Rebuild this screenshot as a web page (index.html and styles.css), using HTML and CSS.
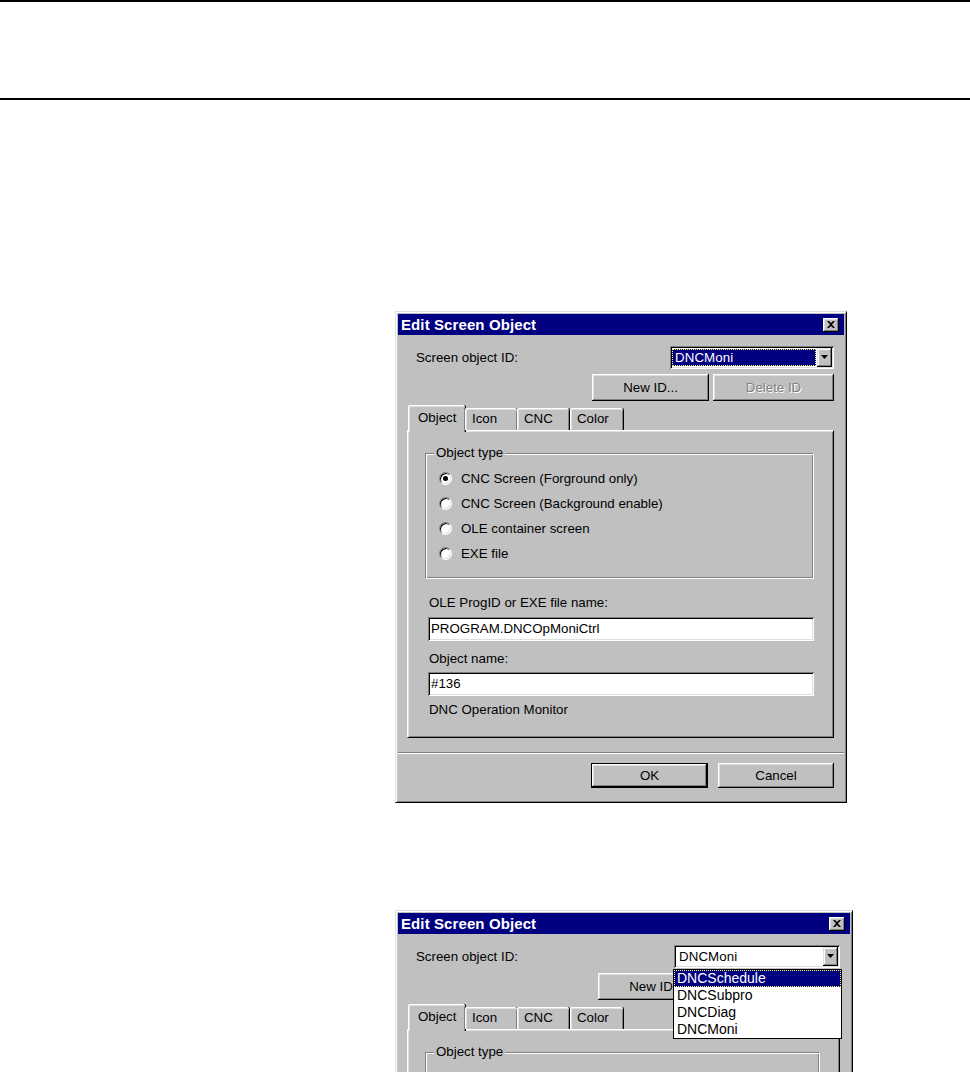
FILE: index.html
```html
<!DOCTYPE html>
<html lang="en">
<head>
<meta charset="utf-8">
<title>Edit Screen Object</title>
<link rel="stylesheet" href="styles.css">
</head>
<body>
<div class="page">
  <div class="running-head"></div>

  <!-- Dialog with the ID combo focused -->
  <figure class="shot shot--first">
    <div class="dialog">
      <div class="titlebar">
        <span class="titlebar__text">Edit Screen Object</span>
        <span class="titlebar__close">
          <svg width="8" height="7" viewBox="0 0 8 7"><path d="M0 0h2l2 2 2-2h2L5 3.5 8 7H6L4 5 2 7H0l3-3.5z" fill="#000"/></svg>
        </span>
      </div>
      <div class="dialog__body">
        <div class="id-row">
          <span class="label label--id">Screen object ID:</span>
          <div class="combo">
            <span class="combo__value combo__value--selected">DNCMoni</span>
            <span class="combo__btn"><svg width="7" height="4" viewBox="0 0 7 4"><path d="M0 0h7L3.5 4z" fill="#000"/></svg></span>
          </div>
        </div>
        <div class="id-buttons">
          <span class="btn btn--newid">New ID...</span>
          <span class="btn btn--delid btn--disabled">Delete ID</span>
        </div>
        <div class="tabs">
          <span class="tab tab--active tab--object">Object</span>
          <span class="tab tab--icon">Icon</span>
          <span class="tab tab--cnc">CNC</span>
          <span class="tab tab--color">Color</span>
        </div>
        <div class="panel">
          <div class="group">
            <span class="group__legend">Object type</span>
            <div class="radio-row"><span class="radio radio--on"></span>CNC Screen (Forground only)</div>
            <div class="radio-row"><span class="radio"></span>CNC Screen (Background enable)</div>
            <div class="radio-row"><span class="radio"></span>OLE container screen</div>
            <div class="radio-row"><span class="radio"></span>EXE file</div>
          </div>
          <div class="field-label field-label--prog">OLE ProgID or EXE file name:</div>
          <div class="textbox">PROGRAM.DNCOpMoniCtrl</div>
          <div class="field-label field-label--name">Object name:</div>
          <div class="textbox">#136</div>
          <div class="field-label field-label--desc">DNC Operation Monitor</div>
        </div>
      </div>
      <div class="separator"></div>
      <div class="footer">
        <span class="btn btn--ok btn--default">OK</span>
        <span class="btn btn--cancel">Cancel</span>
      </div>
    </div>
  </figure>

  <!-- Upper part of the same dialog with the ID list dropped down -->
  <figure class="shot shot--second">
    <div class="dialog dialog--wide">
      <div class="titlebar">
        <span class="titlebar__text">Edit Screen Object</span>
        <span class="titlebar__close">
          <svg width="8" height="7" viewBox="0 0 8 7"><path d="M0 0h2l2 2 2-2h2L5 3.5 8 7H6L4 5 2 7H0l3-3.5z" fill="#000"/></svg>
        </span>
      </div>
      <div class="dialog__body">
        <div class="id-row">
          <span class="label label--id">Screen object ID:</span>
          <div class="combo combo--wide">
            <span class="combo__value">DNCMoni</span>
            <span class="combo__btn"><svg width="7" height="4" viewBox="0 0 7 4"><path d="M0 0h7L3.5 4z" fill="#000"/></svg></span>
            <ul class="droplist">
              <li class="droplist__item droplist__item--hot">DNCSchedule</li>
              <li class="droplist__item">DNCSubpro</li>
              <li class="droplist__item">DNCDiag</li>
              <li class="droplist__item">DNCMoni</li>
            </ul>
          </div>
        </div>
        <div class="id-buttons">
          <span class="btn btn--newid">New ID...</span>
          <span class="btn btn--delid btn--disabled">Delete ID</span>
        </div>
        <div class="tabs">
          <span class="tab tab--active tab--object">Object</span>
          <span class="tab tab--icon">Icon</span>
          <span class="tab tab--cnc">CNC</span>
          <span class="tab tab--color">Color</span>
        </div>
        <div class="panel">
          <div class="group">
            <span class="group__legend">Object type</span>
          </div>
        </div>
      </div>
    </div>
  </figure>
</div>
</body>
</html>
```

FILE: styles.css
```css
html, body {
  margin: 0;
  padding: 0;
  background: #fff;
  height: 1072px;
  overflow: hidden;
}

.page {
  width: 970px;
  font-family: "Liberation Sans", Arial, sans-serif;
  font-size: 13.3px;
  color: #000;
}

/* page header rules */
.running-head {
  height: 96px;
  border-top: 2px solid #000;
  border-bottom: 2px solid #000;
}

.shot {
  margin: 0 0 0 395px;
  padding: 0;
}
.shot--first { margin-top: 211px; }
.shot--second {
  margin-top: 107px;
  height: 162px;
  overflow: hidden;
}

/* window frame */
.dialog {
  box-sizing: border-box;
  width: 452px;
  height: 492px;
  background: #c0c0c0;
  border: 1px solid;
  border-color: #dfdfdf #000 #000 #dfdfdf;
  box-shadow: inset 1px 1px 0 #fff, inset -1px -1px 0 #808080;
  padding: 2px;
  display: flex;
  flex-direction: column;
}
.dialog--wide { width: 458px; }

.titlebar {
  height: 21px;
  background: #000080;
  display: flex;
  align-items: center;
  justify-content: space-between;
  padding: 0 5px 0 3px;
}
.titlebar__text {
  color: #fff;
  font-weight: bold;
  font-size: 15px;
  letter-spacing: 0.1px;
}
.titlebar__close {
  box-sizing: border-box;
  width: 16px;
  height: 14px;
  background: #c0c0c0;
  box-shadow: inset -1px -1px 0 #000, inset 1px 1px 0 #fff, inset -2px -2px 0 #808080, inset 2px 2px 0 #dfdfdf;
  display: flex;
  align-items: center;
  justify-content: center;
  padding: 0 1px 1px 0;
}
.titlebar__close svg { display: block; }

.dialog__body {
  padding: 11px 10px 0 9px;
  display: flex;
  flex-direction: column;
}

.label { line-height: 16px; }
.label--id { margin-left: 9px; }

.id-row {
  height: 23px;
  display: flex;
  align-items: center;
  justify-content: space-between;
}

/* drop-down combo */
.combo {
  position: relative;
  box-sizing: border-box;
  width: 164px;
  height: 23px;
  background: #fff;
  box-shadow: inset 1px 1px 0 #808080, inset -1px -1px 0 #fff, inset 2px 2px 0 #000, inset -2px -2px 0 #dfdfdf;
  padding: 2px;
  display: flex;
}
.combo--wide { width: 166px; }
.combo__value {
  flex: 1;
  line-height: 17px;
  padding: 0 3px;
  margin: 1px 1px 1px 0;
  letter-spacing: 0.1px;
}
.combo__value--selected {
  background: #000080;
  color: #fff;
  outline: 1px dotted #ffff60;
  outline-offset: -1px;
}
.combo__btn {
  box-sizing: border-box;
  width: 15px;
  height: 19px;
  background: #c0c0c0;
  box-shadow: inset -1px -1px 0 #000, inset 1px 1px 0 #dfdfdf, inset -2px -2px 0 #808080, inset 2px 2px 0 #fff;
  display: flex;
  align-items: center;
  justify-content: center;
  padding-bottom: 1px;
}
.combo__btn svg { display: block; }

/* open list of the combo */
.droplist {
  position: absolute;
  top: 24px;
  left: -1px;
  width: 169px;
  box-sizing: border-box;
  margin: 0;
  padding: 0;
  list-style: none;
  background: #fff;
  border: 1px solid #000;
  z-index: 5;
  font-size: 14px;
}
.droplist__item {
  height: 17px;
  line-height: 17px;
  padding-left: 3px;
}
.droplist__item--hot {
  background: #000080;
  color: #fff;
  outline: 1px dotted #ffff60;
  outline-offset: -1px;
}

/* push buttons */
.btn {
  box-sizing: border-box;
  display: flex;
  align-items: center;
  justify-content: center;
  background: #c0c0c0;
  box-shadow: inset -1px -1px 0 #000, inset 1px 1px 0 #fff, inset -2px -2px 0 #808080, inset 2px 2px 0 #dfdfdf;
}
.btn--default {
  border: 1px solid #000;
}
.btn--disabled {
  color: #808080;
  text-shadow: 1px 1px 0 #fff;
}

.id-buttons {
  margin-top: 5px;
  height: 27px;
  display: flex;
  justify-content: flex-end;
  gap: 4px;
}
.btn--newid { width: 117px; }
.btn--delid { width: 121px; }

/* property sheet tabs */
.tabs {
  margin-top: 4px;
  height: 25px;
  display: flex;
  align-items: flex-end;
  padding-left: 1px;
  position: relative;
  z-index: 1;
}
.tab {
  box-sizing: border-box;
  height: 22px;
  line-height: 20px;
  background: #c0c0c0;
  border-top: 1px solid #fff;
  border-left: 1px solid #fff;
  border-radius: 2px 2px 0 0;
  box-shadow: inset 0 1px 0 #dfdfdf, inset 1px 0 0 #dfdfdf, inset -1px 0 0 #808080, 1px 0 0 #000;
  padding-left: 6px;
}
.tab--active {
  height: 27px;
  margin-bottom: -2px;
  padding-left: 9px;
  line-height: 23px;
}
.tab--object { width: 57px; }
.tab--icon { width: 52px; }
.tab--cnc { width: 52px; }
.tab--color { width: 53px; margin-left: 1px; }

.panel {
  box-sizing: border-box;
  height: 308px;
  background: #c0c0c0;
  border: 1px solid;
  border-color: #fff #000 #000 #fff;
  box-shadow: inset 1px 1px 0 #dfdfdf, inset -1px -1px 0 #808080;
  padding: 22px 19px 0 17px;
  display: flex;
  flex-direction: column;
}

/* etched group box */
.group {
  position: relative;
  box-sizing: border-box;
  height: 126px;
  border: 1px solid;
  border-color: #808080 #fff #fff #808080;
  box-shadow: inset 1px 1px 0 #fff, inset -1px -1px 0 #808080;
  padding: 12px 0 0 13px;
}
.group__legend {
  position: absolute;
  top: -9px;
  left: 8px;
  background: #c0c0c0;
  padding: 0 2px 0 2px;
  line-height: 16px;
}

.radio-row {
  height: 25px;
  display: flex;
  align-items: center;
  gap: 9px;
}
.radio {
  box-sizing: border-box;
  position: relative;
  width: 13px;
  height: 13px;
  border-radius: 50%;
  background: #fff;
  border: 1px solid;
  border-color: #808080 #fff #fff #808080;
  box-shadow: inset 1px 1px 0 #000, inset -1px -1px 0 #dfdfdf;
}
.radio--on::after {
  content: "";
  position: absolute;
  left: 3px;
  top: 3px;
  width: 5px;
  height: 5px;
  border-radius: 50%;
  background: #000;
}

.field-label {
  line-height: 16px;
  margin-left: 4px;
}
.field-label--prog { margin-top: 16px; margin-bottom: 6px; }
.field-label--name { margin-top: 10px; margin-bottom: 5px; }
.field-label--desc { margin-top: 6px; }

.textbox {
  box-sizing: border-box;
  height: 24px;
  margin-left: 3px;
  line-height: 24px;
  padding-left: 3px;
  background: #fff;
  box-shadow: inset 1px 1px 0 #808080, inset -1px -1px 0 #fff, inset 2px 2px 0 #000, inset -2px -2px 0 #dfdfdf;
}

.separator {
  margin: 14px 0 0;
  border-top: 1px solid #808080;
  border-bottom: 1px solid #fff;
  height: 0;
}

.footer {
  margin-top: 9px;
  height: 25px;
  display: flex;
  justify-content: flex-end;
  gap: 10px;
  padding-right: 10px;
}
.btn--ok { width: 117px; }
.btn--cancel { width: 116px; }
```
